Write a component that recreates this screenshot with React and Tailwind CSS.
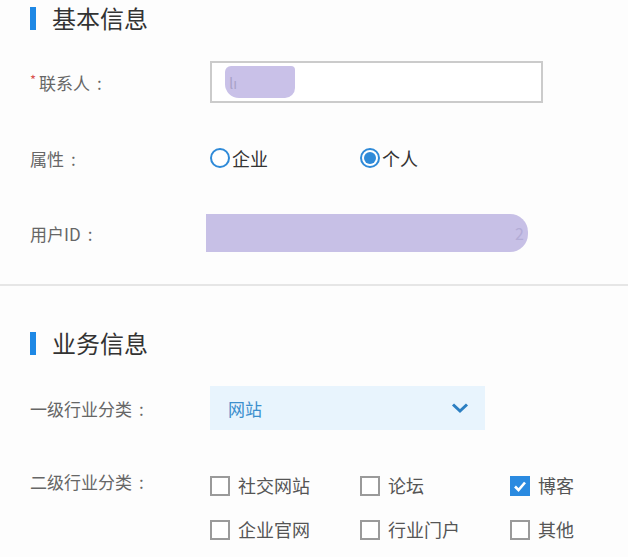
import { useState } from "react";

const font = { fontFamily: '"Noto Sans CJK SC", "Noto Sans", sans-serif' };

function SectionTitle({ children }) {
    return (
        <div className="flex items-center h-[36px] pl-[30px]">
            <div className="w-[6px] h-[23px] bg-[#1e88e5]" />
            <span className="ml-[16px] text-[24px] leading-none text-[#333]">{children}</span>
        </div>
    );
}

// label with a spaced colon, as in the reference
function Label({ text, required }) {
    return (
        <div className="w-[180px] shrink-0 text-[17px] text-[#666] leading-none flex items-center">
            {required && <span className="text-[#d9534f] text-[13px] mr-[3px] -mt-[6px]">*</span>}
            {text}
            <span className="ml-[7px]">:</span>
        </div>
    );
}

function Row({ label, required, className = "", children }) {
    return (
        <div className={`flex items-center pl-[30px] ${className}`}>
            <Label text={label} required={required} />
            {children}
        </div>
    );
}

function Radio({ label, checked, onClick }) {
    return (
        <button onClick={onClick} className="flex items-center cursor-pointer">
            <span className="w-[20px] h-[20px] rounded-full border-2 border-[#2f8ad8] flex items-center justify-center bg-white">
                {checked && <span className="w-[12px] h-[12px] rounded-full bg-[#2f8ad8]" />}
            </span>
            <span className="ml-[2px] text-[18px] text-[#333] leading-none">{label}</span>
        </button>
    );
}

function Checkbox({ label, checked, onClick }) {
    return (
        <button onClick={onClick} className="flex items-center w-[150px] cursor-pointer">
            {checked ? (
                <span className="w-[20px] h-[20px] bg-[#2a8ae0] flex items-center justify-center">
                    <svg width="14" height="14" viewBox="0 0 14 14">
                        <path d="M2 7.5 L5.5 11 L12 3.5" fill="none" stroke="white" strokeWidth="2.6" />
                    </svg>
                </span>
            ) : (
                <span className="w-[20px] h-[20px] border-2 border-[#9a9a9a] bg-white" />
            )}
            <span className="ml-[8px] text-[18px] text-[#555] leading-none -mt-[3px]">{label}</span>
        </button>
    );
}

export default function App() {
    const [type, setType] = useState("person");
    const [checks, setChecks] = useState({ 博客: true });
    const toggle = (k) => setChecks(c => ({ ...c, [k]: !c[k] }));

    return (
        <div className="flex w-[628px] h-[557px] overflow-hidden" style={font}>
            <div className="flex-1 bg-[#fdfdfd]">
                <SectionTitle>基本信息</SectionTitle>

                <Row label="联系人" required className="mt-[25px] h-[42px]">
                    <div className="w-[333px] h-[42px] border-2 border-[#cbcbcb] bg-white flex items-center pl-[13px]">
                        <div className="w-[70px] h-[32px] bg-[#c9c1e8] rounded-[6px_4px_10px_14px] flex items-center pl-[4px]">
                            <span className="text-[15px] text-[#a9a3c9] leading-none">lı</span>
                        </div>
                    </div>
                </Row>

                <Row label="属性" className="mt-[34px] h-[42px]">
                    <div className="w-[150px]">
                        <Radio label="企业" checked={type === "company"} onClick={() => setType("company")} />
                    </div>
                    <Radio label="个人" checked={type === "person"} onClick={() => setType("person")} />
                </Row>

                <Row label="用户ID" className="mt-[33px] h-[42px]">
                    <div className="-ml-[4px] w-[322px] h-[38px] bg-[#c7c0e6] rounded-r-[18px] flex items-center justify-end pr-[4px]">
                        <span className="text-[16px] text-[#b3acd6] leading-none">2</span>
                    </div>
                </Row>

                <div className="mt-[30px] border-t-2 border-[#e6e6e6]" />

                <div className="mt-[39px]">
                    <SectionTitle>业务信息</SectionTitle>
                </div>

                <Row label="一级行业分类" className="mt-[25px] h-[44px]">
                    <button className="w-[275px] h-[44px] bg-[#e8f4fd] flex items-center justify-between pl-[18px] pr-[16px] cursor-pointer">
                        <span className="text-[17px] text-[#3c8fcd] leading-none">网站</span>
                        <svg width="18" height="12" viewBox="0 0 18 12">
                            <path d="M2 2.5 L9 9 L16 2.5" fill="none" stroke="#2c7fc2" strokeWidth="3" />
                        </svg>
                    </button>
                </Row>

                <div className="flex pl-[30px] mt-[40px]">
                    <div className="h-[32px] flex items-center -mt-[5px]">
                        <Label text="二级行业分类" />
                    </div>
                    <div className="flex flex-col gap-[12px]">
                        <div className="flex h-[32px] items-center">
                            {["社交网站", "论坛", "博客"].map(k => (
                                <Checkbox key={k} label={k} checked={!!checks[k]} onClick={() => toggle(k)} />
                            ))}
                        </div>
                        <div className="flex h-[32px] items-center">
                            {["企业官网", "行业门户", "其他"].map(k => (
                                <Checkbox key={k} label={k} checked={!!checks[k]} onClick={() => toggle(k)} />
                            ))}
                        </div>
                    </div>
                </div>
            </div>
            <div className="w-[4px] bg-black" />
        </div>
    );
}
